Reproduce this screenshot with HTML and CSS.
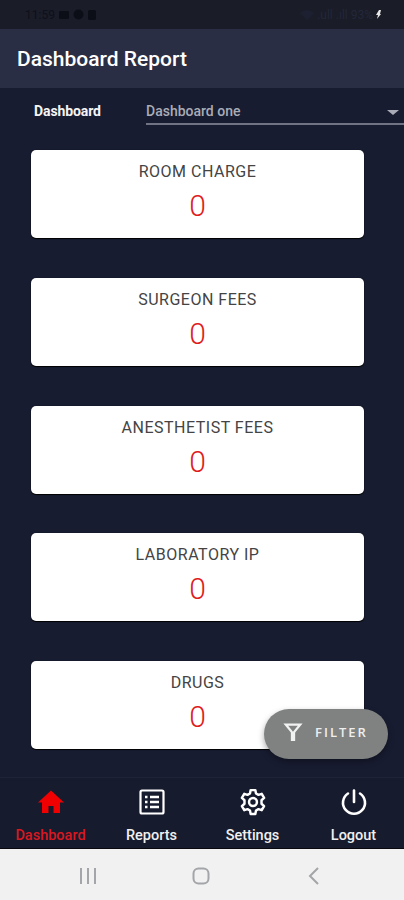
FILE: index.html
```html
<!DOCTYPE html>
<html lang="en">
<head>
<meta charset="utf-8">
<title>Dashboard Report</title>
<link rel="stylesheet" href="styles.css">
</head>
<body>
<div class="phone">
  <div class="status">
    <div class="status-left">
      <span>11:59</span>
      <svg width="10" height="9" viewBox="0 0 10 9"><rect width="10" height="8" y="1" rx="1" fill="#0c0e17"/></svg>
      <svg width="11" height="11" viewBox="0 0 11 11"><circle cx="5.500" cy="5.500" r="5" fill="#0c0e17"/></svg>
      <svg width="8" height="10" viewBox="0 0 8 10"><rect width="8" height="10" rx="1.500" fill="#0c0e17"/></svg>
    </div>
    <div class="status-right">
      <svg width="14" height="10" viewBox="0 0 14 10"><path d="M0 3 C4 -1 10 -1 14 3 L7 10 Z" fill="#1c2030"/></svg>
      <span>.ull .ıll 93%</span>
      <svg class="bolt" width="5" height="9" viewBox="0 0 5 9"><path d="M3 0 L5 0 L4 4 L5 4 L1 9 L2 5 L0 5 Z" fill="#e8e8e8"/></svg>
    </div>
  </div>
  <header class="appbar"><h1>Dashboard Report</h1></header>
  <div class="picker">
    <span class="picker-label">Dashboard</span>
    <div class="picker-select">
      <span>Dashboard one</span>
      <i class="caret"></i>
    </div>
  </div>
  <main class="cards">
    <section class="card"><h2>ROOM CHARGE</h2><p>0</p></section>
    <section class="card"><h2>SURGEON FEES</h2><p>0</p></section>
    <section class="card"><h2>ANESTHETIST FEES</h2><p>0</p></section>
    <section class="card"><h2>LABORATORY IP</h2><p>0</p></section>
    <section class="card"><h2>DRUGS</h2><p>0</p></section>
  </main>
  <button class="fab">
    <svg width="24" height="24" viewBox="0 0 20 20"><path d="M2 3 H18 L11.800 10.500 V17.500 H8.200 V10.500 Z M6 4.800 L10 9.800 L14 4.800 Z" fill="#f2f2f2" fill-rule="evenodd"/></svg>
    <span>FILTER</span>
  </button>
  <nav class="tabs">
    <div class="tab active">
      <svg width="28" height="28" viewBox="0 0 28 28"><path d="M14 2.500 L27 14.500 H23 V25 H16.500 V18 H11.500 V25 H5 V14.500 H1 Z" fill="#f00000"/></svg>
      <span>Dashboard</span>
    </div>
    <div class="tab">
      <svg width="28" height="28" viewBox="0 0 28 28" fill="none" stroke="#fff"><rect x="2.500" y="2.500" width="23" height="23" rx="1.500" stroke-width="2.200"/><path d="M12 9 H21 M12 14 H21 M12 19 H21 M7 9 H9.500 M7 14 H9.500 M7 19 H9.500" stroke-width="2.400"/></svg>
      <span>Reports</span>
    </div>
    <div class="tab">
      <svg width="28" height="28" viewBox="0 0 24 24" fill="none" stroke="#fff" stroke-width="2.100" stroke-linejoin="round"><circle cx="12" cy="12" r="3.400"/><path d="M10 1.800 H14 L14.600 4.700 L16.700 5.900 L19.500 5 L21.500 8.500 L19.300 10.500 V13.500 L21.500 15.500 L19.500 19 L16.700 18.100 L14.600 19.300 L14 22.200 H10 L9.400 19.300 L7.300 18.100 L4.500 19 L2.500 15.500 L4.700 13.500 V10.500 L2.500 8.500 L4.500 5 L7.300 5.900 L9.400 4.700 Z"/></svg>
      <span>Settings</span>
    </div>
    <div class="tab">
      <svg width="28" height="28" viewBox="0 0 28 28" fill="none" stroke="#fff" stroke-width="2.600" stroke-linecap="round"><path d="M14 2.500 V14"/><path d="M8 5.500 A11 11 0 1 0 20 5.500"/></svg>
      <span>Logout</span>
    </div>
  </nav>
  <div class="sysnav">
    <svg width="18" height="16" viewBox="0 0 18 16" fill="#a3a5a8"><rect x="1" y="0" width="2" height="16"/><rect x="8" y="0" width="2" height="16"/><rect x="15" y="0" width="2" height="16"/></svg>
    <svg class="sys-home" width="18" height="18" viewBox="0 0 18 18" fill="none" stroke="#a3a5a8" stroke-width="2"><rect x="1.500" y="1.500" width="15" height="15" rx="5"/></svg>
    <svg width="12" height="18" viewBox="0 0 12 18" fill="none" stroke="#a3a5a8" stroke-width="2"><path d="M10 1 L2 9 L10 17"/></svg>
  </div>
</div>
</body>
</html>
```
FILE: styles.css
```css
* { box-sizing: border-box; }
html, body { margin: 0; padding: 0; }
body { background: #1a1e32; font-family: Roboto, "Liberation Sans", sans-serif; }
.phone { width: 404px; height: 900px; position: relative; display: flex; flex-direction: column; overflow: hidden; background: #181c31; }
.status { height: 29px; flex: none; background: #1a1c28; display: flex; justify-content: space-between; align-items: center; padding: 0 23px 0 25px; font-size: 12px; color: #0e101a; }
.status-left, .status-right { display: flex; align-items: center; gap: 4px; }
.status-right { color: #23273a; gap: 3px; }
.appbar { height: 59px; flex: none; background: #2a2e44; display: flex; align-items: center; padding: 0 17px; }
.appbar h1 { margin: 0; font-size: 21px; font-weight: 500; color: #fff; }
.picker { height: 37px; flex: none; display: flex; padding-left: 34px; align-items: flex-start; }
.picker-label { width: 112px; font-size: 14px; font-weight: 700; letter-spacing: -0.1px; color: #f4f4f4; line-height: 47px; height: 37px; }
.picker-select { flex: 1; height: 37px; border-bottom: 2px solid #6f7384; display: flex; justify-content: space-between; align-items: center; padding: 11px 5px 0 0; font-size: 14px; color: #a9acb6; font-weight: 500; letter-spacing: 0; }
.caret { width: 0; height: 0; border: 6px solid transparent; border-top: 5px solid #a9acb6; border-bottom: 0; margin-top: 2px; }
.cards { display: flex; flex-direction: column; gap: 39.75px; padding: 25px 40px 0 31px; }
.card { height: 88px; flex: none; background: #fff; border-radius: 5px; box-shadow: 0 1px 1px #000, 0 0 1px #000; text-align: center; padding-top: 12px; }
.card h2 { margin: 0; font-size: 16px; line-height: 19px; font-weight: 400; color: #444; letter-spacing: 0.5px; }
.card p { margin: 7px 0 0; font-size: 30px; line-height: 35px; font-weight: 300; color: #e01b1b; }
.fab { position: absolute; left: 264px; top: 709px; width: 124px; height: 50px; border: 0; border-radius: 25px; background: #808282; box-shadow: 0 3px 6px rgba(0,0,0,.35); display: flex; align-items: center; padding: 0 0 4px 17px; gap: 10px; color: #eee; font-family: "Open Sans", sans-serif; font-size: 13px; font-weight: 600; letter-spacing: 2px; }
.tabs { position: absolute; left: 0; top: 777px; width: 404px; height: 72px; background: #171b2e; border-top: 1px solid #1f2338; display: flex; justify-content: space-between; padding: 10px 0 0; border-bottom: 1px solid #08090f; }
.tab { width: 101px; display: flex; flex-direction: column; align-items: center; gap: 12px; font-size: 14.5px; line-height: 16px; color: #f0f0f0; font-weight: 500; letter-spacing: 0; }
.tab.active { color: #d81820; }
.sysnav { position: absolute; left: 0; top: 849px; width: 404px; height: 51px; background: #f1f1f1; display: flex; align-items: center; gap: 95px; padding: 3px 0 0 79px; }
.sys-home { margin-right: 3px; }
```
